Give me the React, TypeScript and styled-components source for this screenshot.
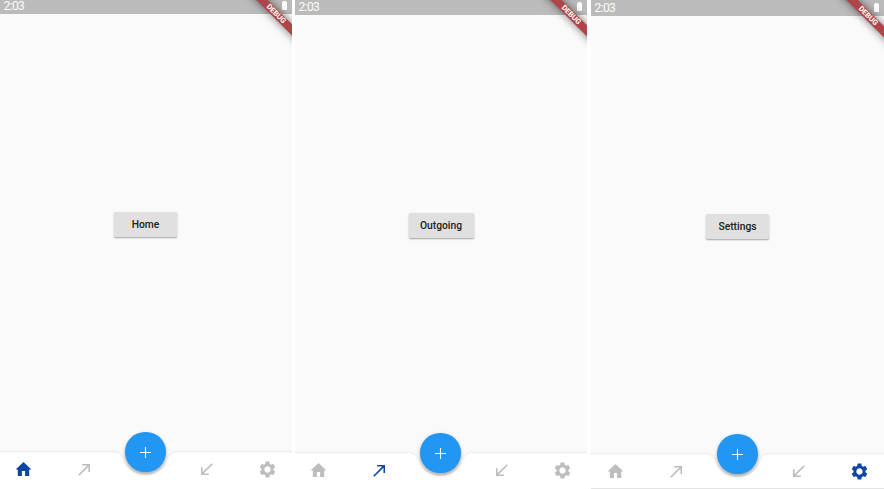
import React from "react";
import styled, { createGlobalStyle } from "styled-components";

const GlobalStyle = createGlobalStyle`
  * { box-sizing: border-box; }
  body { margin: 0; background: #fff; font-family: Roboto, sans-serif; overflow: hidden; }
`;

const Board = styled.main`
  display: grid;
  grid-template-columns: 292px 292px 293px;
  column-gap: 3px;
  width: 884px;
  height: 489px;
  overflow: hidden;

  & > :last-child { margin-left: 1px; }
`;

const Phone = styled.section<{ $bar: number; $ruled?: boolean }>`
  position: relative;
  display: grid;
  grid-template-rows: ${(p) => p.$bar}px 438px 1fr;
  height: 489px;
  width: 100%;
  background: #fafafa;
  border-bottom: ${(p) => (p.$ruled ? "1px solid #e4e4e4" : "0")};
  overflow: hidden;
`;

const StatusBar = styled.header`
  display: flex;
  align-items: flex-end;
  justify-content: space-between;
  padding: 0 5px 0 3.5px;
  background: #bbb;
  color: #fcfcfc;
  font-size: 12px;
  letter-spacing: -0.6px;
  line-height: 15px;
`;

const Battery = styled.svg`
  display: block;
  width: 5px;
  height: 9px;
  margin-bottom: 4px;
`;

const RibbonClip = styled.div`
  position: absolute;
  top: 0;
  right: 0;
  width: 70px;
  height: 70px;
  overflow: hidden;
`;

const Ribbon = styled.div<{ $top: number }>`
  position: absolute;
  top: ${(p) => p.$top}px;
  right: -29px;
  width: 90px;
  height: 8.2px;
  background: #b04549;
  box-shadow: 0 0 8px rgba(0, 0, 0, 0.55);
  color: #fff;
  font-size: 7.4px;
  font-weight: 700;
  line-height: 8.6px;
  letter-spacing: 0.1px;
  text-align: center;
  transform: rotate(45deg);
`;

const Content = styled.div<{ $nudge: number }>`
  display: flex;
  justify-content: center;
  padding: 198px ${(p) => p.$nudge}px 0 0;
`;

const RaisedButton = styled.button<{ $width: number }>`
  width: ${(p) => p.$width}px;
  height: 25px;
  padding: 0;
  border: 0;
  border-radius: 1.5px;
  background: #e0e0e0;
  color: #212121;
  font: 500 10.3px/26px Roboto, sans-serif;
  box-shadow: 0 1px 2px rgba(0, 0, 0, 0.25), 0 1px 1px rgba(0, 0, 0, 0.12);
`;

const BottomBar = styled.nav`
  position: relative;
`;

const BarShape = styled.svg<{ $shift: number }>`
  position: absolute;
  left: ${(p) => p.$shift}px;
  top: -4px;
  width: 293px;
  height: 41px;
  overflow: visible;
`;

const Tabs = styled.div<{ $shift: number }>`
  position: relative;
  display: grid;
  grid-template-columns: 61px 122px 61px 19px;
  padding: 8px 0 0 ${(p) => 14 + p.$shift}px;
`;

const Glyph = styled.svg<{ $active: boolean }>`
  display: block;
  width: 19px;
  height: 19px;
  fill: ${(p) => (p.$active ? "#0d47a1" : "#bdbdbd")};
`;

const Fab = styled.button<{ $shift: number }>`
  position: absolute;
  left: ${(p) => 125.3 + p.$shift}px;
  top: -20px;
  display: grid;
  place-items: center;
  width: 40.4px;
  height: 40.4px;
  padding: 0;
  border: 0;
  border-radius: 50%;
  background: #2196f3;
  box-shadow: 0 2px 3px rgba(0, 0, 0, 0.25), 0 1px 4px rgba(0, 0, 0, 0.12);
`;

const ICONS = [
  "M10 20.2v-6.4h4v6.4h5.2V12H22L12 2.5 2 12h2.8v8.2z",
  "M9 5v2h6.59L4 18.59 5.41 20 17 8.41V15h2V5z",
  "M20 5.41L18.59 4 7 15.59V9H5v10h10v-2H8.41z",
  "M19.43 12.98c.04-.32.07-.64.07-.98s-.03-.66-.07-.98l2.11-1.65c.19-.15.24-.42.12-.64l-2-3.46c-.12-.22-.39-.3-.61-.22l-2.49 1c-.52-.4-1.08-.73-1.69-.98l-.38-2.65C14.46 2.18 14.25 2 14 2h-4c-.25 0-.46.18-.49.42l-.38 2.65c-.61.25-1.17.59-1.69.98l-2.49-1c-.23-.09-.49 0-.61.22l-2 3.46c-.13.22-.07.49.12.64l2.11 1.65c-.04.32-.07.65-.07.98s.03.66.07.98l-2.11 1.65c-.19.15-.24.42-.12.64l2 3.46c.12.22.39.3.61.22l2.49-1c.52.4 1.08.73 1.69.98l.38 2.65c.03.24.24.42.49.42h4c.25 0 .46-.18.49-.42l.38-2.65c.61-.25 1.17-.59 1.69-.98l2.49 1c.23.09.49 0 .61-.22l2-3.46c.12-.22.07-.49-.12-.64l-2.11-1.65zM12 16c-2.21 0-4-1.79-4-4s1.79-4 4-4 4 1.79 4 4-1.79 4-4 4z",
];

interface ScreenProps {
  label: string;
  active: number;
  bar: number;
  buttonWidth: number;
  nudge?: number;
  shift?: number;
  ruled?: boolean;
}

function Screen({ label, active, bar, buttonWidth, nudge = 0, shift = 0, ruled }: ScreenProps) {
  return (
    <Phone $bar={bar} $ruled={ruled}>
      <StatusBar>
        <span>2:03</span>
        <Battery viewBox="0 0 5 9">
          <path d="M1 0h3v1h1v8H0V1h1z" fill="#fff" />
        </Battery>
      </StatusBar>
      <Content $nudge={nudge}>
        <RaisedButton $width={buttonWidth}>{label}</RaisedButton>
      </Content>
      <BottomBar>
        <BarShape viewBox="0 -4 293 41" $shift={shift}>
          <path
            d="M-5 .3H112C119 .3 121 3 123 7C126 17 135 23 145.5 23S165 17 168 7C170 3 172 .3 179 .3H300V45H-5Z"
            fill="#fff"
            style={{ filter: "drop-shadow(0 -0.3px 1px rgba(0,0,0,.07))" }}
          />
        </BarShape>
        <Tabs $shift={shift}>
          {ICONS.map((d, i) => (
            <Glyph key={i} viewBox="0 0 24 24" $active={i === active}>
              <path d={d} />
            </Glyph>
          ))}
        </Tabs>
        <Fab aria-label="Add" $shift={shift}>
          <svg width="11" height="11" viewBox="0 0 11 11">
            <path d="M5.5 0v11M0 5.5h11" stroke="#fff" strokeWidth="1.1" />
          </svg>
        </Fab>
      </BottomBar>
      <RibbonClip>
        <Ribbon $top={bar - 4}>DEBUG</Ribbon>
      </RibbonClip>
    </Phone>
  );
}

export default function App() {
  return (
    <>
      <GlobalStyle />
      <Board>
        <Screen label="Home" active={0} bar={14} buttonWidth={63} nudge={1} />
        <Screen label="Outgoing" active={1} bar={15} buttonWidth={65} nudge={0} />
        <Screen label="Settings" active={3} bar={16} buttonWidth={63} shift={1} ruled />
      </Board>
    </>
  );
}
